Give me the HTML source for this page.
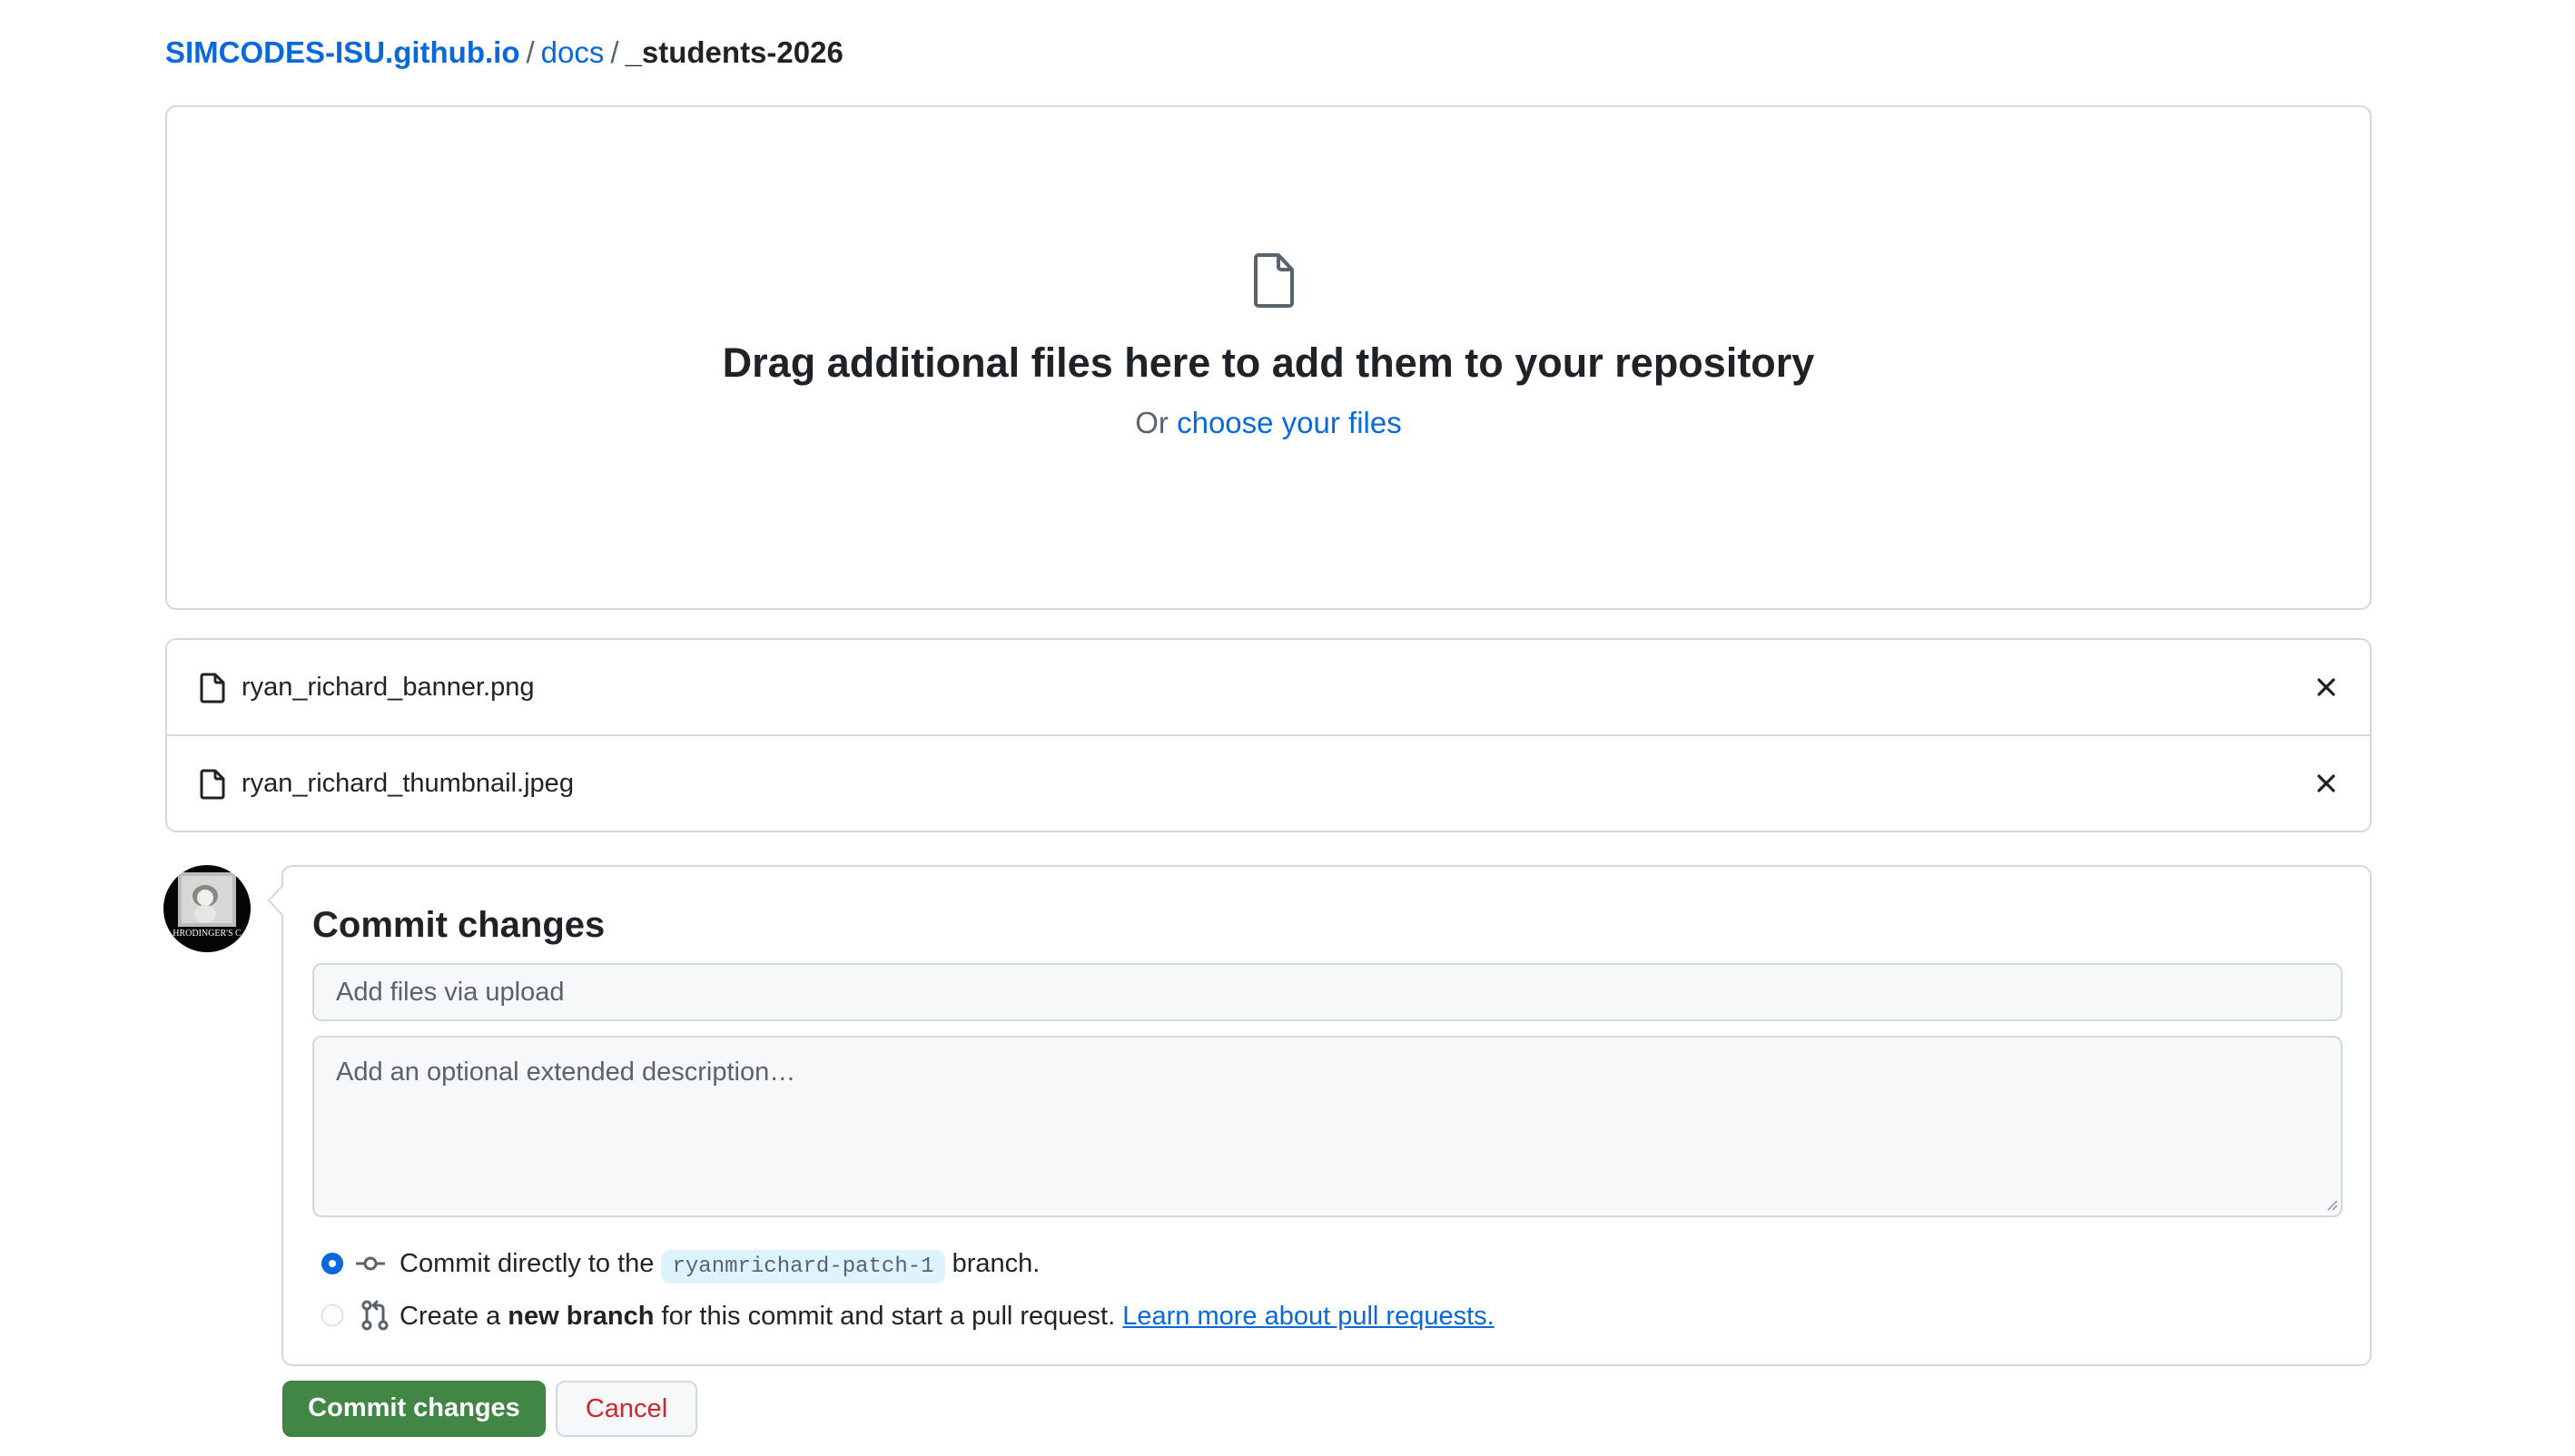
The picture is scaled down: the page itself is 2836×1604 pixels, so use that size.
<!DOCTYPE html>
<html><head><meta charset="utf-8"><style>
*{box-sizing:border-box;margin:0;padding:0}
body{width:2836px;height:1604px;background:#fff;font-family:"Liberation Sans",Arial,sans-serif;color:#1f2328;position:relative;overflow:hidden}
.abs{position:absolute}
.crumb{left:182px;top:38px;font-size:33px;line-height:40px;white-space:nowrap}
.crumb a{color:#0969da;text-decoration:none}
.crumb .sep{color:#59636e;margin:0 7px}
.box{border:2px solid #d1d9e0;border-radius:12px}
.drop{left:182px;top:116px;width:2430px;height:556px}
.h{left:182px;width:2430px;text-align:center;white-space:nowrap}
.files{left:182px;top:703px;width:2430px;height:214px}
.row{position:absolute;left:0;width:100%;height:106px}
.row .n{position:absolute;left:82px;top:34px;font-size:29px;line-height:36px}
.row svg.f{position:absolute;left:36px;top:36px}
.row svg.x{position:absolute;right:38px;top:42px}
.commit{left:310px;top:953px;width:2302px;height:552px;background:#fff}
.inp{position:absolute;left:32px;width:2236px;background:#f6f8fa;border:2px solid #d1d9e0;border-radius:10px;color:#59636e;font-size:29px;padding-left:24px}
code{font-family:"Liberation Mono",monospace;background:#ddf4ff;color:#59636e;font-size:24px;padding:5px 12px;border-radius:10px}
.btn{position:absolute;top:1521px;height:62px;border-radius:10px;font-size:29px;line-height:58px;text-align:center;font-weight:bold}
</style></head><body>
<div class="abs crumb"><a href="#" style="font-weight:bold">SIMCODES-ISU.github.io</a><span class="sep">/</span><a href="#">docs</a><span class="sep">/</span><b>_students-2026</b></div>

<div class="abs box drop"></div>
<svg class="abs" style="left:1380px;top:278px" width="46" height="62" viewBox="0 0 46 62"><path d="M6 3h22l15 16v37a3 3 0 0 1-3 3H6a3 3 0 0 1-3-3V6a3 3 0 0 1 3-3z M28 3v13a3 3 0 0 0 3 3h12" fill="none" stroke="#59636e" stroke-width="4" stroke-linejoin="round"/></svg>
<div class="abs h" style="top:372px;font-size:45px;line-height:56px;font-weight:bold">Drag additional files here to add them to your repository</div>
<div class="abs h" style="top:446px;font-size:33px;line-height:40px;color:#59636e">Or <span style="color:#0969da">choose your files</span></div>

<div class="abs box files">
 <div class="row" style="top:0;border-bottom:2px solid #d1d9e0">
  <svg class="f" width="28" height="34" viewBox="0 0 28 34"><path d="M4 2h13l9 9v19a2 2 0 0 1-2 2H4a2 2 0 0 1-2-2V4a2 2 0 0 1 2-2z M17 2v7a2 2 0 0 0 2 2h7" fill="none" stroke="#1f2328" stroke-width="3" stroke-linejoin="round"/></svg>
  <div class="n">ryan_richard_banner.png</div>
  <svg class="x" width="20" height="20" viewBox="0 0 20 20"><path d="M2 2L18 18M18 2L2 18" stroke="#1f2328" stroke-width="3.2" stroke-linecap="round"/></svg>
 </div>
 <div class="row" style="top:106px">
  <svg class="f" width="28" height="34" viewBox="0 0 28 34"><path d="M4 2h13l9 9v19a2 2 0 0 1-2 2H4a2 2 0 0 1-2-2V4a2 2 0 0 1 2-2z M17 2v7a2 2 0 0 0 2 2h7" fill="none" stroke="#1f2328" stroke-width="3" stroke-linejoin="round"/></svg>
  <div class="n">ryan_richard_thumbnail.jpeg</div>
  <svg class="x" width="20" height="20" viewBox="0 0 20 20"><path d="M2 2L18 18M18 2L2 18" stroke="#1f2328" stroke-width="3.2" stroke-linecap="round"/></svg>
 </div>
</div>

<svg class="abs" style="left:180px;top:953px" width="96" height="96" viewBox="0 0 96 96">
 <defs><clipPath id="c"><circle cx="48" cy="48" r="48"/></clipPath></defs>
 <g clip-path="url(#c)">
 <rect width="96" height="96" fill="#050505"/>
 <rect x="16" y="8" width="64" height="60" fill="#b9bcbc"/>
 <rect x="20" y="12" width="56" height="52" fill="#d6d8d8"/>
 <ellipse cx="46" cy="34" rx="14" ry="12" fill="#8a8580"/>
 <ellipse cx="46" cy="36" rx="9" ry="9" fill="#f0eeea"/>
 <ellipse cx="46" cy="54" rx="12" ry="10" fill="#e8e6e2"/>
 <text x="48" y="78" font-family="Liberation Serif,serif" font-size="10" fill="#fff" text-anchor="middle">HRODINGER'S C</text>
 </g>
</svg>

<div class="abs box commit">
 <svg style="position:absolute;left:-18px;top:20px" width="20" height="34" viewBox="0 0 20 34"><path d="M18 0L2 17L18 34" fill="#fff" stroke="#d1d9e0" stroke-width="2"/></svg>
 <div style="position:absolute;left:32px;top:40px;font-size:40px;line-height:48px;font-weight:bold">Commit changes</div>
 <div class="inp" style="top:106px;height:64px;line-height:60px">Add files via upload</div>
 <div class="inp" style="top:186px;height:200px;padding-top:20px;line-height:36px">Add an optional extended description…</div>
 <svg style="position:absolute;left:2250px;top:366px" width="14" height="14"><path d="M12 2L2 12M12 7L7 12" stroke="#8c959f" stroke-width="1.5"/></svg>
 <div style="position:absolute;left:42px;top:425px;width:24px;height:24px;border-radius:50%;background:#0969da;border:1px solid #0969da"><div style="position:absolute;left:7px;top:7px;width:8px;height:8px;border-radius:50%;background:#fff"></div></div>
 <svg style="position:absolute;left:80px;top:427px" width="32" height="20" viewBox="0 0 32 20"><circle cx="16" cy="10" r="6" fill="none" stroke="#59636e" stroke-width="3"/><path d="M1 10h9M22 10h9" stroke="#59636e" stroke-width="3" stroke-linecap="round"/></svg>
 <div style="position:absolute;left:128px;top:419px;font-size:29px;line-height:36px;white-space:nowrap">Commit directly to the <code>ryanmrichard-patch-1</code> branch.</div>
 <div style="position:absolute;left:42px;top:482px;width:24px;height:24px;border-radius:50%;background:#fff;border:1px solid #c8ced5"></div>
 <svg style="position:absolute;left:86px;top:477px" width="30" height="34" viewBox="0 0 30 34"><circle cx="6" cy="6" r="4" fill="none" stroke="#59636e" stroke-width="3"/><circle cx="6" cy="28" r="4" fill="none" stroke="#59636e" stroke-width="3"/><circle cx="24" cy="28" r="4" fill="none" stroke="#59636e" stroke-width="3"/><path d="M6 10v14M24 24V10a4 4 0 0 0-4-4h-6M17 2l-4 4 4 4" fill="none" stroke="#59636e" stroke-width="3" stroke-linecap="round" stroke-linejoin="round"/></svg>
 <div style="position:absolute;left:128px;top:477px;font-size:29px;line-height:36px;white-space:nowrap">Create a <b>new branch</b> for this commit and start a pull request. <span style="color:#0969da;text-decoration:underline">Learn more about pull requests.</span></div>
</div>

<div class="btn" style="left:311px;width:290px;background:#418645;color:#fff;border:1px solid #3a7a3f">Commit changes</div>
<div class="btn" style="left:612px;width:156px;background:#f6f8fa;color:#d1242f;border:2px solid #d1d9e0;font-weight:normal">Cancel</div>
</body></html>
